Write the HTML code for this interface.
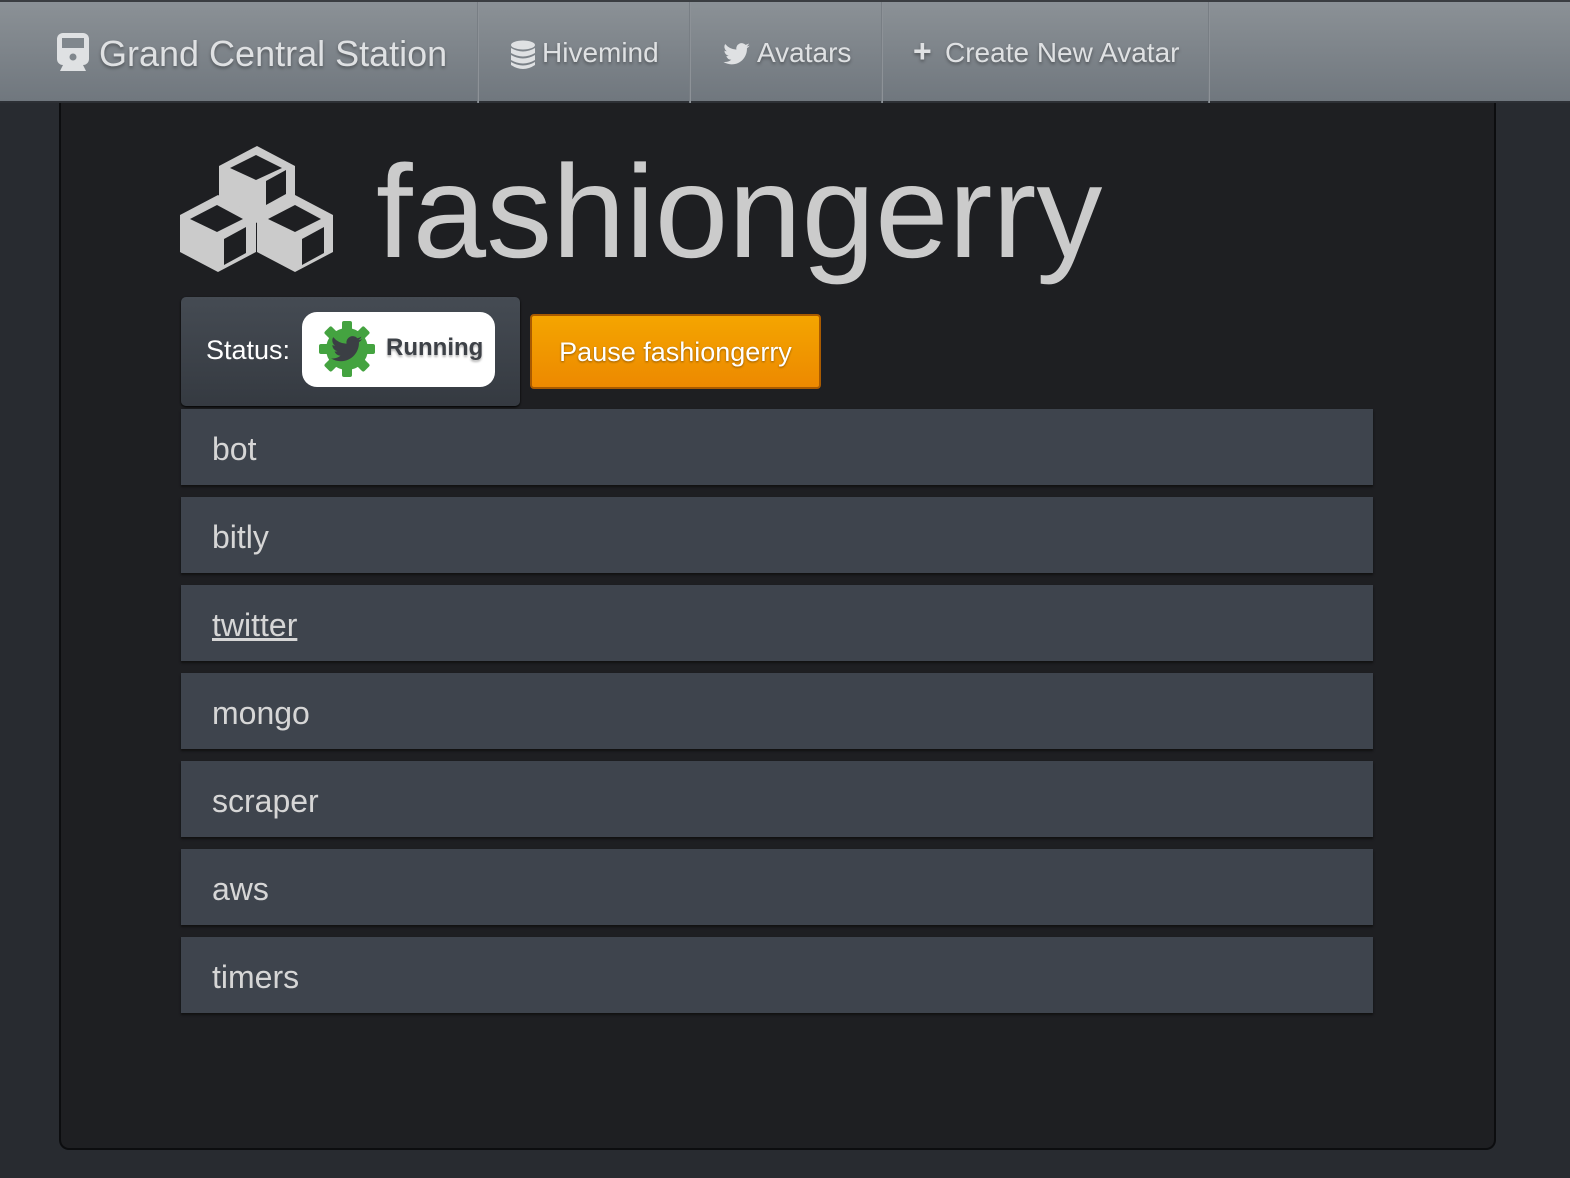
<!DOCTYPE html>
<html><head><meta charset="utf-8"><style>
*{margin:0;padding:0;box-sizing:border-box}
body{width:1570px;height:1178px;background:#282b30;font-family:"Liberation Sans",sans-serif;position:relative;overflow:hidden}
.nav{position:absolute;left:0;top:0;width:1570px;height:103px;background:linear-gradient(#8b9196,#70777e);border-top:2px solid #3a3d41;border-bottom:2px solid #2d3035}
.nav .t{position:absolute;color:#dfe1e3;text-shadow:0 2px 3px rgba(0,0,0,.35);white-space:nowrap}
.div{position:absolute;top:0;width:2px;height:101px;background:linear-gradient(90deg,#6e747a,#979ca1)}
.box{position:absolute;left:59px;top:103px;width:1437px;height:1047px;background:#1e1f22;border:2px solid #0c0d0f;border-top:none;border-radius:0 0 10px 10px}
.title{position:absolute;left:376px;top:146px;font-size:132px;color:#cbcbcb;line-height:1}
.status{position:absolute;left:181px;top:297px;width:339px;height:109px;background:linear-gradient(#454b53,#353a41);border-radius:5px;box-shadow:0 1px 2px #000}
.pill{position:absolute;left:302px;top:312px;width:193px;height:75px;background:#fff;border-radius:15px}
.btn{position:absolute;left:530px;top:314px;width:291px;height:75px;background:linear-gradient(#f4a500,#ed8900);border:2px solid #a95a00;border-radius:4px;color:#fff;font-size:27px;text-align:center;line-height:73px;text-shadow:0 1px 2px rgba(0,0,0,.4)}
.item{position:absolute;left:181px;width:1192px;height:76px;background:#3e444d;box-shadow:0 2px 2px #111;color:#d6d6d6;font-size:32px;padding-left:31px;line-height:80px}
</style></head><body>
<div class="nav">
<svg style="position:absolute;left:57px;top:31px" width="32" height="40" viewBox="0 0 32 40"><rect x="0" y="0" width="32" height="32" rx="6" fill="#dfe1e3"/><rect x="5" y="5" width="22" height="10" fill="#80878d"/><circle cx="16" cy="24" r="3.5" fill="#80878d"/><path d="M6 32h20l3 6H3z" fill="#dfe1e3"/></svg>
<div class="t" style="left:99px;top:31px;font-size:36px">Grand Central Station</div>
<div class="div" style="left:477px"></div>
<svg style="position:absolute;left:510px;top:38px" width="26" height="30" viewBox="0 0 26 30"><ellipse cx="13" cy="5" rx="12" ry="4.5" fill="#dfe1e3"/><path d="M1 8q12 7 24 0v5q-12 7-24 0z M1 15q12 7 24 0v5q-12 7-24 0z M1 22q12 7 24 0v3q-12 8-24 0z" fill="#dfe1e3"/></svg>
<div class="t" style="left:542px;top:35px;font-size:28px">Hivemind</div>
<div class="div" style="left:689px"></div>
<svg style="position:absolute;left:723px;top:41px" width="27" height="22" viewBox="0 0 24 20"><path d="M24 2.4a10 10 0 0 1-2.8.8 5 5 0 0 0 2.2-2.7 10 10 0 0 1-3.1 1.2A4.9 4.9 0 0 0 11.9 6 14 14 0 0 1 1.7.9a4.9 4.9 0 0 0 1.5 6.6 5 5 0 0 1-2.2-.6 4.9 4.9 0 0 0 3.9 4.8 5 5 0 0 1-2.2.1 4.9 4.9 0 0 0 4.6 3.4A9.9 9.9 0 0 1 0 17.2 14 14 0 0 0 7.5 19.4c9.1 0 14-7.5 14-14v-.6A10 10 0 0 0 24 2.4z" fill="#dfe1e3"/></svg>
<div class="t" style="left:757px;top:35px;font-size:28px">Avatars</div>
<div class="div" style="left:881px"></div>
<div class="t" style="left:913px;top:31px;font-size:32px;font-weight:bold">+</div>
<div class="t" style="left:945px;top:35px;font-size:28px">Create New Avatar</div>
<div class="div" style="left:1208px"></div>
</div>
<div class="box"></div>
<svg style="position:absolute;left:180px;top:146px" width="153" height="126" viewBox="0 0 153 126">
<g fill="#cbcbcb">
<path d="M77 0l38 20v37l-38 20-38-20V20z"/>
<path d="M38 49l38 20v37l-38 20L0 106V69z"/>
<path d="M115 49l38 20v37l-38 20-38-20V69z"/>
</g>
<g fill="#1e1f22">
<path d="M50 22l26-13 26 13-26 12z"/><path d="M86 35l20-11v24l-20 11z"/>
<path d="M10 73l27-14 26 14-26 13z"/><path d="M44 93l22-12v26l-22 12z"/>
<path d="M88 73l27-14 26 14-26 13z"/><path d="M122 93l22-12v26l-22 12z"/>
</g></svg>
<div class="title">fashiongerry</div>
<div class="status"></div>
<div style="position:absolute;left:206px;top:335px;font-size:27px;color:#fff">Status:</div>
<div class="pill"></div>
<svg style="position:absolute;left:318px;top:320px" width="58" height="58" viewBox="0 0 58 58"><g fill="#44a340"><circle cx="29" cy="29" r="21"/><g id="t"><rect x="24" y="1" width="10" height="12" rx="2"/></g><use href="#t" transform="rotate(45 29 29)"/><use href="#t" transform="rotate(90 29 29)"/><use href="#t" transform="rotate(135 29 29)"/><use href="#t" transform="rotate(180 29 29)"/><use href="#t" transform="rotate(225 29 29)"/><use href="#t" transform="rotate(270 29 29)"/><use href="#t" transform="rotate(315 29 29)"/></g><path transform="translate(13 16) scale(1.3)" d="M24 2.4a10 10 0 0 1-2.8.8 5 5 0 0 0 2.2-2.7 10 10 0 0 1-3.1 1.2A4.9 4.9 0 0 0 11.9 6 14 14 0 0 1 1.7.9a4.9 4.9 0 0 0 1.5 6.6 5 5 0 0 1-2.2-.6 4.9 4.9 0 0 0 3.9 4.8 5 5 0 0 1-2.2.1 4.9 4.9 0 0 0 4.6 3.4A9.9 9.9 0 0 1 0 17.2 14 14 0 0 0 7.5 19.4c9.1 0 14-7.5 14-14v-.6A10 10 0 0 0 24 2.4z" fill="#3b3f44"/></svg>
<div style="position:absolute;left:386px;top:334px;font-size:24px;font-weight:bold;color:#3d4147;text-shadow:0 2px 2px rgba(0,0,0,.3)">Running</div>
<div class="btn">Pause fashiongerry</div>
<div class="item" style="top:409px">bot</div>
<div class="item" style="top:497px">bitly</div>
<div class="item" style="top:585px"><span style="text-decoration:underline">twitter</span></div>
<div class="item" style="top:673px">mongo</div>
<div class="item" style="top:761px">scraper</div>
<div class="item" style="top:849px">aws</div>
<div class="item" style="top:937px">timers</div>
</body></html>
